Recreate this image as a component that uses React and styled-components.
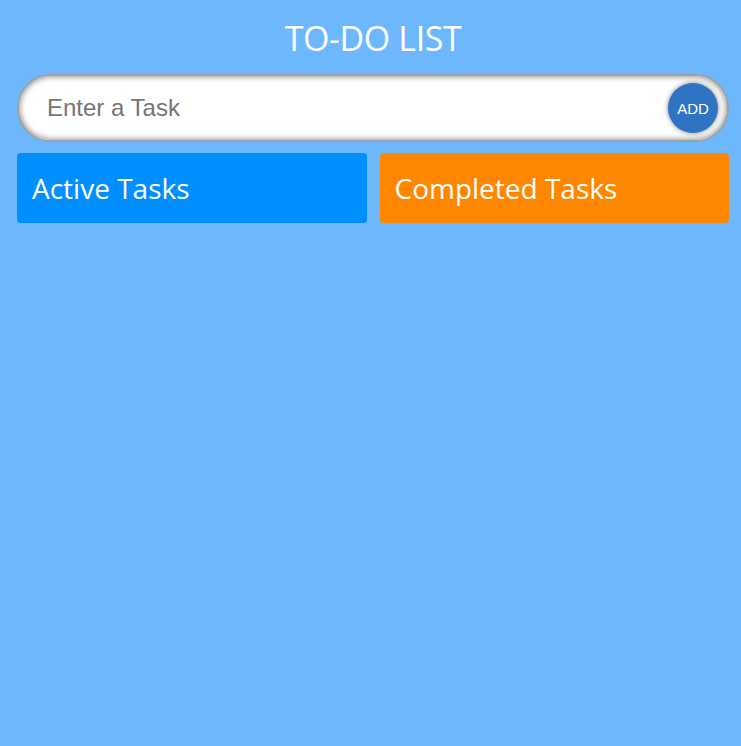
import React, { useState } from "react";
import styled, { createGlobalStyle } from "styled-components";

const GlobalStyle = createGlobalStyle`
  html, body {
    margin: 0;
    padding: 0;
    background: #6db8fd;
  }
  body {
    min-height: 746px;
    font-family: "Open Sans", "Noto Sans", sans-serif;
  }
`;

const Page = styled.div`
  padding: 13px 12px 0 17px;
`;

const Title = styled.h1`
  margin: 0 0 11px;
  text-align: center;
  color: #fff;
  font-weight: 400;
  font-size: 34px;
  line-height: 50px;
  letter-spacing: -0.4px;
`;

const InputBar = styled.form`
  display: flex;
  align-items: center;
  height: 68px;
  box-sizing: border-box;
  border: 2px solid #a0a0a0;
  border-radius: 34px;
  background: #fff;
  box-shadow: inset 0 0 6px rgba(0, 0, 0, 0.55);
  padding: 0 9px 0 26px;
`;

const TaskInput = styled.input`
  flex: 1;
  border: none;
  outline: none;
  background: transparent;
  font-family: "Liberation Sans", Arial, sans-serif;
  font-size: 24px;
  color: #333;
  &::placeholder {
    color: #757575;
  }
`;

const AddButton = styled.button`
  width: 50px;
  height: 50px;
  border-radius: 50%;
  border: none;
  background: #2f74c3;
  color: #fff;
  font-family: "Liberation Sans", Arial, sans-serif;
  font-size: 15px;
  padding: 0;
  cursor: pointer;
  box-shadow: 0 0 5px rgba(0, 0, 0, 0.5);
`;

const Columns = styled.div`
  display: grid;
  grid-template-columns: 1fr 1fr;
  gap: 13px;
  margin-top: 11px;
`;

const Panel = styled.div`
  background: ${(p) => p.$color};
  border-radius: 4px;
  height: 70px;
  display: flex;
  align-items: center;
  padding: 0 15px;
  color: #fff;
  font-size: 28px;
`;

export default function App() {
  const [task, setTask] = useState("");
  const onChangeTask = (e) => { setTask(e.target.value) };
  const onSubmit = (e) => { e.preventDefault(); setTask("") };

  return (
    <>
      <GlobalStyle />
      <Page>
        <Title>TO-DO LIST</Title>
        <InputBar onSubmit={onSubmit}>
          <TaskInput placeholder="Enter a Task" value={task} onChange={onChangeTask} />
          <AddButton type="submit">ADD</AddButton>
        </InputBar>
        <Columns>
          <Panel $color="#008fff">Active Tasks</Panel>
          <Panel $color="#ff8700">Completed Tasks</Panel>
        </Columns>
      </Page>
    </>
  );
}
